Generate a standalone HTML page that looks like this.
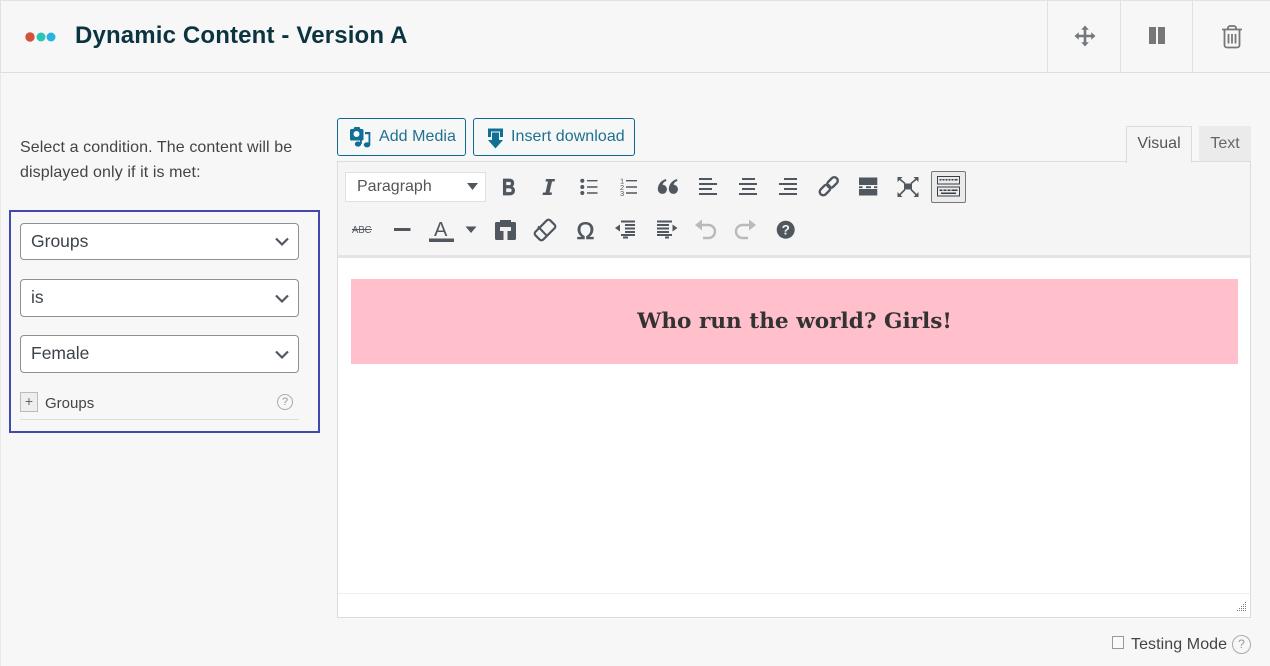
<!DOCTYPE html>
<html><head><meta charset="utf-8"><style>
html,body{margin:0;padding:0;width:1270px;height:666px;overflow:hidden;background:#f7f7f7}
body{position:relative;font-family:"Liberation Sans",sans-serif;color:#444}
.a{position:absolute;box-sizing:border-box;white-space:nowrap}
svg{position:absolute;overflow:visible}
.sel{left:20px;width:279px;background:#fff;border:1px solid #8c8f94;border-radius:4px;font-size:17.500px;color:#3c434a;padding-left:10px}
.btn{top:118px;height:38px;border:1px solid #0e6a8c;border-radius:3px;background:#f6f7f7;color:#1f7091;font-size:16px;line-height:35px;letter-spacing:.05px}
</style></head><body>
<div class="a" style="left:0;top:0;width:1270px;height:73px;border-top:1px solid #e2e2e2;border-left:1px solid #e2e2e2;border-bottom:1px solid #dedede"></div>
<div class="a" style="left:0;top:73px;width:1px;height:593px;background:#e8e8e8"></div>
<svg style="left:0;top:0" width="60" height="72"><circle cx="30" cy="37" r="4.700" fill="#d2533a"/><circle cx="41" cy="37" r="4.500" fill="#2cc5b9"/><circle cx="51" cy="37" r="4.500" fill="#29b3e2"/></svg>
<div class="a" style="left:75px;top:21px;font-size:24px;line-height:30px;font-weight:700;color:#0b3440;letter-spacing:.15px">Dynamic Content - Version A</div>
<div class="a" style="left:1047px;top:0;width:1px;height:72px;background:#e2e2e2"></div>
<div class="a" style="left:1120px;top:0;width:1px;height:72px;background:#e2e2e2"></div>
<div class="a" style="left:1192px;top:0;width:1px;height:72px;background:#e2e2e2"></div>
<svg style="left:1074px;top:25px" width="22" height="22" viewBox="0 0 22 22"><path d="M11 .500l3.800 4.300h-2.500v4.900h4.900V7.200L21.500 11l-4.300 3.800v-2.500h-4.900v4.900h2.500L11 21.500l-3.800-4.300h2.500v-4.900H4.800v2.500L.500 11l4.300-3.800v2.500h4.900V4.800H7.200z" fill="#74787c"/></svg>
<div class="a" style="left:1149px;top:27px;width:7px;height:17px;background:#777"></div>
<div class="a" style="left:1158px;top:27px;width:7px;height:17px;background:#777"></div>
<svg style="left:1221px;top:25px" width="22" height="24" viewBox="0 0 22 24" fill="none" stroke="#777" stroke-width="1.800"><path d="M1 4.500h20M7 4.500V3a2 2 0 0 1 2-2h4a2 2 0 0 1 2 2v1.500M3.500 4.500V20a2.500 2.500 0 0 0 2.500 2.500h10a2.500 2.500 0 0 0 2.500-2.500V4.500M7.500 9v9.500M11 9v9.500M14.500 9v9.500"/></svg>

<div class="a" style="left:20px;top:134.500px;font-size:16px;line-height:25px;color:#444;white-space:normal;width:295px;letter-spacing:.1px">Select a condition. The content will be<br>displayed only if it is met:</div>
<div class="a" style="left:9px;top:210px;width:311px;height:223px;border:2px solid #4148ae"></div>
<div class="a sel" style="top:223px;height:37px;line-height:34px">Groups</div>
<div class="a sel" style="top:279px;height:38px;line-height:34px">is</div>
<div class="a sel" style="top:335px;height:38px;line-height:35px">Female</div>
<svg style="left:275px;top:237px" width="14" height="10" fill="none" stroke="#50575e" stroke-width="2.200"><path d="M1 1.500l6 6 6-6"/></svg>
<svg style="left:275px;top:294px" width="14" height="10" fill="none" stroke="#50575e" stroke-width="2.200"><path d="M1 1.500l6 6 6-6"/></svg>
<svg style="left:275px;top:350px" width="14" height="10" fill="none" stroke="#50575e" stroke-width="2.200"><path d="M1 1.500l6 6 6-6"/></svg>
<div class="a" style="left:20px;top:392px;width:18px;height:20px;background:#eee;border:1px solid #bbb;font-size:14px;line-height:17px;text-align:center;color:#666">+</div>
<div class="a" style="left:45px;top:395px;font-size:15px;line-height:18px;color:#444">Groups</div>
<div class="a" style="left:277px;top:394px;width:16px;height:16px;border:1px solid #aaa;border-radius:50%;font-size:11px;line-height:14px;text-align:center;color:#999">?</div>
<div class="a" style="left:20px;top:419px;width:279px;height:1px;background:#ddd"></div>

<div class="a btn" style="left:337px;width:129px;padding-left:41px">Add Media</div>
<div class="a btn" style="left:473px;width:162px;padding-left:37px">Insert download</div>

<div class="a" style="left:1126px;top:126px;width:66px;height:37px;background:#f5f5f5;border:1px solid #dcdcdc;border-bottom:0;font-size:16px;line-height:34px;text-align:center;color:#555;z-index:3">Visual</div>
<div class="a" style="left:1199px;top:126px;width:52px;height:36px;background:#ebebeb;font-size:16px;line-height:35px;text-align:center;color:#666">Text</div>

<div class="a" style="left:337px;top:161px;width:914px;height:457px;background:#fff;border:1px solid #dcdcdc"></div>
<div class="a" style="left:338px;top:162px;width:912px;height:94px;background:#f5f5f5"></div>
<div class="a" style="left:338px;top:255px;width:912px;height:3px;background:#e4e4e4"></div>
<div class="a" style="left:338px;top:593px;width:912px;height:1px;background:#eee"></div>

<div class="a" style="left:345px;top:172px;width:141px;height:30px;background:#fff;border:1px solid #e0e0e0;font-size:16px;line-height:27px;padding-left:11px;color:#555">Paragraph</div>
<div class="a" style="left:931px;top:171px;width:35px;height:32px;background:#ebebeb;border:1px solid #777;border-radius:2px"></div>

<svg style="left:0;top:0" width="1270" height="666" viewBox="0 0 1270 666">
<!-- media buttons -->
<g fill="#0f6f94">
<path d="M352 129h1.500l1-2h5l1 2h1.500a1.500 1.500 0 0 1 1.500 1.500V139a1.500 1.500 0 0 1-1.500 1.500h-10A1.500 1.500 0 0 1 350 139v-8.500a1.500 1.500 0 0 1 2-1.500z"/>
<ellipse cx="358" cy="144" rx="3.200" ry="2.600"/><ellipse cx="367" cy="144.800" rx="3.200" ry="2.600"/>
<rect x="360" y="139" width="1.800" height="5"/><rect x="368.500" y="133" width="1.800" height="12"/><rect x="365" y="132" width="5.300" height="2.200"/>
<path d="M488 128.500h15V137h-3v-5.500h-9V137h-3z"/>
<path d="M492 132.500h7v7.500h4l-7.500 8.500-7.500-8.500h4z"/>
</g>
<circle cx="356.500" cy="134" r="3" fill="#f6f7f7"/>
<!-- toolbar selects -->
<path d="M467 183h11l-5.500 7z" fill="#50575e"/>
<!-- row 1 -->
<text x="502" y="195" font-family="Liberation Sans" font-size="23" font-weight="700" fill="#50575e" stroke="#50575e" stroke-width=".7" textLength="13.500" lengthAdjust="spacingAndGlyphs">B</text>
<path d="M546 179h9l-.5 2.500h-2.500l-2.500 11h2.500l-.5 2.500h-9l.5-2.500h2.500l2.500-11h-2.500z" fill="#50575e"/>
<g fill="#50575e"><circle cx="582.300" cy="180.700" r="2"/><circle cx="582.300" cy="187" r="2"/><circle cx="582.300" cy="193" r="2"/></g>
<path d="M587 180.700h10.500M587 187h10.500M587 193h10.500M626 180.700h11M626 187h11M626 193h11" stroke="#50575e" stroke-width="1.400"/>
<g font-family="Liberation Sans" font-size="7.500" fill="#50575e"><text x="620" y="183.500">1</text><text x="620" y="190">2</text><text x="620" y="196">3</text></g>
<path d="M665.800 179c-4.800 1.600-8 5.400-8 10.500a4.600 4.600 0 1 0 4.900-4.800c.1-1.500 1.300-2.800 3.800-3.800zM676.800 179c-4.800 1.600-8 5.400-8 10.500a4.600 4.600 0 1 0 4.900-4.800c.1-1.500 1.300-2.800 3.800-3.800z" fill="#50575e"/>
<path d="M699 179h13M699 184h18M699 189h13M699 194h18M742 179h13M739 184h18M742 189h13M739 194h18M784 179h13M779 184h18M784 189h13M779 194h18" stroke="#50575e" stroke-width="2"/>
<g fill="none" stroke="#50575e" stroke-width="2.400"><rect x="819" y="186.500" width="12" height="7" rx="3.500" transform="rotate(-45 825 190)"/><rect x="826.500" y="179" width="12" height="7" rx="3.500" transform="rotate(-45 832.500 182.500)"/></g>
<path d="M859 177.500h18.300v7.500H859zM859 189h18.300v6.500H859zM859 186.300h3.500v1.800H859zM866 186.300h5v1.800h-5zM874 186.300h3.300v1.800H874z" fill="#50575e"/>
<rect x="904" y="183.500" width="8" height="6" fill="#50575e"/>
<path d="M899 178.500l6 5M917 178.500l-6 5M899 195.500l6-6M917 195.500l-6-6" stroke="#50575e" stroke-width="1.600"/>
<path d="M897.500 177h5l-5 5zM918.500 177h-5l5 5zM897.500 197h5l-5-5zM918.500 197h-5l5-5z" fill="#50575e"/>
<!-- kitchen sink -->
<path d="M937.500 176.500h22v7.500h-22zM937.500 187h22v9h-22z" fill="none" stroke="#3a3f45"/>
<path d="M939.500 179h18v1.500h-18zM939.500 189.500h18v1.500h-18zM941 192.500h15v1.500h-15z" fill="#3a3f45"/>
<path d="M942 179v1.500M945 179v1.500M948 179v1.500M951 179v1.500M954 179v1.500M943 189.500v1.500M947 189.500v1.500M951 189.500v1.500" stroke="#ebebeb"/>
<!-- row 2 -->
<text x="352" y="233" font-family="Liberation Sans" font-size="10.500" fill="#50575e" textLength="19.500" lengthAdjust="spacingAndGlyphs">ABC</text>
<path d="M352 229.500h20" stroke="#50575e" stroke-width=".9"/>
<rect x="394" y="228" width="16.500" height="3" fill="#50575e"/>
<text x="434" y="236" font-family="Liberation Sans" font-size="20" fill="#50575e">A</text>
<rect x="429" y="238.500" width="25" height="3.500" fill="#50575e"/>
<path d="M465.500 226.500h11l-5.500 6.500z" fill="#50575e"/>
<path d="M496.500 222h3.500v-2h11v2h3.500a1.500 1.500 0 0 1 1.500 1.500v15a1.500 1.500 0 0 1-1.500 1.500h-18a1.500 1.500 0 0 1-1.500-1.500v-15a1.500 1.500 0 0 1 1.500-1.500z" fill="#50575e"/>
<path d="M500 227h11v4h-3.500v9h-4v-9H500z" fill="#f0f0f0"/>
<rect x="534.500" y="224.500" width="21" height="11" rx="2.500" transform="rotate(-45 545 230)" fill="none" stroke="#50575e" stroke-width="2.200"/>
<path d="M538 226.500l9.500 10" stroke="#50575e" stroke-width="2"/>
<text x="576.500" y="238.800" font-family="Liberation Sans" font-size="24" fill="#50575e" stroke="#50575e" stroke-width=".6">Ω</text>
<path d="M621 221.500h14M625 225h10M625 228.500h10M625 232h10M621 235h14M623 237.500h5" stroke="#50575e" stroke-width="2"/>
<path d="M615 228l5-3.500v7z" fill="#50575e"/>
<path d="M657 221.500h15M657 225h12M657 228.500h12M657 232h12M657 235h15M665 237.500h4" stroke="#50575e" stroke-width="2"/>
<path d="M677.500 228l-5-3.500v7z" fill="#50575e"/>
<path d="M700 225h8.500a6.500 6.500 0 0 1 0 13H703" fill="none" stroke="#b8babc" stroke-width="2.400"/>
<path d="M695 225l7-5.500v11z" fill="#b8babc"/>
<path d="M751 225h-8.500a6.500 6.500 0 0 0 0 13h5.500" fill="none" stroke="#b8babc" stroke-width="2.400"/>
<path d="M756 225l-7-5.500v11z" fill="#b8babc"/>
<circle cx="785.700" cy="229.700" r="9" fill="#50575e"/>
<text x="785.700" y="234.500" text-anchor="middle" font-family="Liberation Sans" font-size="13.500" font-weight="700" fill="#f5f5f5">?</text>
<!-- resize -->
<path d="M1245 602h1v1h-1zM1243 604h1v1h-1zM1245 604h1v1h-1zM1241 606h1v1h-1zM1243 606h1v1h-1zM1245 606h1v1h-1zM1239 608h1v1h-1zM1241 608h1v1h-1zM1243 608h1v1h-1zM1245 608h1v1h-1zM1237 610h1v1h-1zM1239 610h1v1h-1zM1241 610h1v1h-1zM1243 610h1v1h-1zM1245 610h1v1h-1z" fill="#777c82"/>
</svg>

<div class="a" style="left:351px;top:279px;width:887px;height:85px;background:#ffc0cb;text-align:center;font-family:'DejaVu Serif','Liberation Serif',serif;font-weight:700;font-size:21.600px;line-height:85px;color:#333">Who run the world? Girls!</div>

<div class="a" style="left:1112px;top:636px;width:12px;height:13px;background:#fafafa;border:1px solid #999"></div>
<div class="a" style="left:1131px;top:635px;font-size:16px;line-height:19px;color:#444;letter-spacing:.08px">Testing Mode</div>
<div class="a" style="left:1232px;top:635px;width:19px;height:19px;border:1px solid #aaa;border-radius:50%;font-size:12px;line-height:17px;text-align:center;color:#999">?</div>
</body></html>
